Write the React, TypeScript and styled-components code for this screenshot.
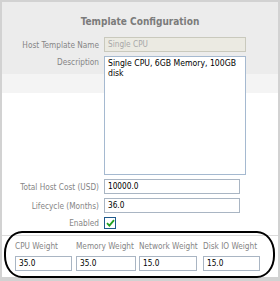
import React from 'react';
import styled, { createGlobalStyle } from 'styled-components';

// -------------------------
// Global
// -------------------------

const Global = createGlobalStyle`
	html, body {
		margin: 0;
		padding: 0;
		background: #d2d2d2;
	}
	* {
		box-sizing: border-box;
	}
`;

const FONT = `"DejaVu Sans Condensed", "DejaVu Sans", sans-serif`;

// -------------------------
// Styled Components
// -------------------------

const Frame = styled.div`
	width: 280px;
	height: 281px;
	padding: 2px 2px 4px 2px;
	background: #d2d2d2;
	font-family: ${FONT};
	font-size: 8.2px;
`;

const Panel = styled.div`
	height: 100%;
	display: flex;
	flex-direction: column;
	background: linear-gradient(
		#ececec 0 72px,
		#f4f4f4 72px 91px,
		#ffffff 91px
	);
`;

const Title = styled.div`
	margin-top: 13px;
	height: 14px;
	line-height: 14px;
	text-align: center;
	font-weight: bold;
	font-size: 10px;
	color: #7b7b7b;
	padding-left: 0px;
`;

const Form = styled.div`
	margin-top: 8px;
	display: grid;
	grid-template-columns: 98px 1fr;
	column-gap: 4px;
	row-gap: 4px;
	align-items: center;
`;

const Label = styled.label<{ $top?: boolean }>`
	text-align: right;
	color: #858585;
	padding-right: 1px;
	align-self: ${p => (p.$top ? 'start' : 'center')};
	padding-top: ${p => (p.$top ? '1px' : '0')};
	white-space: nowrap;
`;

const Input = styled.div<{ $w: number; $disabled?: boolean }>`
	width: ${p => p.$w}px;
	height: 15px;
	line-height: 13px;
	padding: 0 3px;
	border: 1px solid ${p => (p.$disabled ? '#c9c9bd' : '#a9b5c3')};
	background: ${p => (p.$disabled ? '#ebeae2' : '#ffffff')};
	color: ${p => (p.$disabled ? '#a8a8a8' : '#000000')};
	white-space: nowrap;
	overflow: hidden;
`;

const TextArea = styled.div`
	width: 142px;
	height: 119px;
	padding: 1px 3px;
	line-height: 10px;
	border: 1px solid #a5b9d0;
	background: #ffffff;
	color: #000000;
	font-size: 8.6px;
`;

const Check = styled.div`
	width: 12px;
	height: 12px;
	border: 1px solid #1f5a8c;
	background: #ffffff;
	display: flex;
	align-items: center;
	justify-content: center;
`;

const Weights = styled.div`
	position: relative;
	margin-top: 6px;
	border-top: 1px solid #dcdcdc;
	padding: 4px 0 0 13px;
	flex: 1;
`;

const WeightGrid = styled.div`
	display: grid;
	grid-template-columns: 61px 63px 64px 58px;
	row-gap: 4px;
`;

const WeightLabel = styled.div`
	color: #858585;
	white-space: nowrap;
	height: 12px;
	line-height: 12px;
`;

const Oval = styled.div`
	position: absolute;
	left: 2px;
	right: 3px;
	top: -5px;
	bottom: -1px;
	border: 2px solid #000000;
	border-radius: 18px / 22px;
	pointer-events: none;
`;

// -------------------------
// Data
// -------------------------

const weights = [
	{ label: 'CPU Weight', value: '35.0', w: 57 },
	{ label: 'Memory Weight', value: '35.0', w: 60 },
	{ label: 'Network Weight', value: '15.0', w: 58 },
	{ label: 'Disk IO Weight', value: '15.0', w: 57 },
];

// -------------------------
// Page
// -------------------------

export default () => (
	<Frame>
		<Global />
		<Panel>
			<Title>Template Configuration</Title>
			<Form>
				<Label>Host Template Name</Label>
				<Input $w={142} $disabled>
					Single CPU
				</Input>
				<Label $top>Description</Label>
				<TextArea>Single CPU, 6GB Memory, 100GB disk</TextArea>
				<Label>Total Host Cost (USD)</Label>
				<Input $w={136}>10000.0</Input>
				<Label>Lifecycle (Months)</Label>
				<Input $w={136}>36.0</Input>
				<Label>Enabled</Label>
				<Check>
					<svg width="9" height="8" viewBox="0 0 9 8">
						<path
							d="M1 4.2 L3.4 6.6 L8 1.2"
							fill="none"
							stroke="#21a121"
							strokeWidth="1.8"
						/>
					</svg>
				</Check>
			</Form>
			<Weights>
				<WeightGrid>
					{weights.map(x => (
						<WeightLabel key={x.label}>{x.label}</WeightLabel>
					))}
					{weights.map(x => (
						<Input key={x.label + 'v'} $w={x.w}>
							{x.value}
						</Input>
					))}
				</WeightGrid>
				<Oval />
			</Weights>
		</Panel>
	</Frame>
);
